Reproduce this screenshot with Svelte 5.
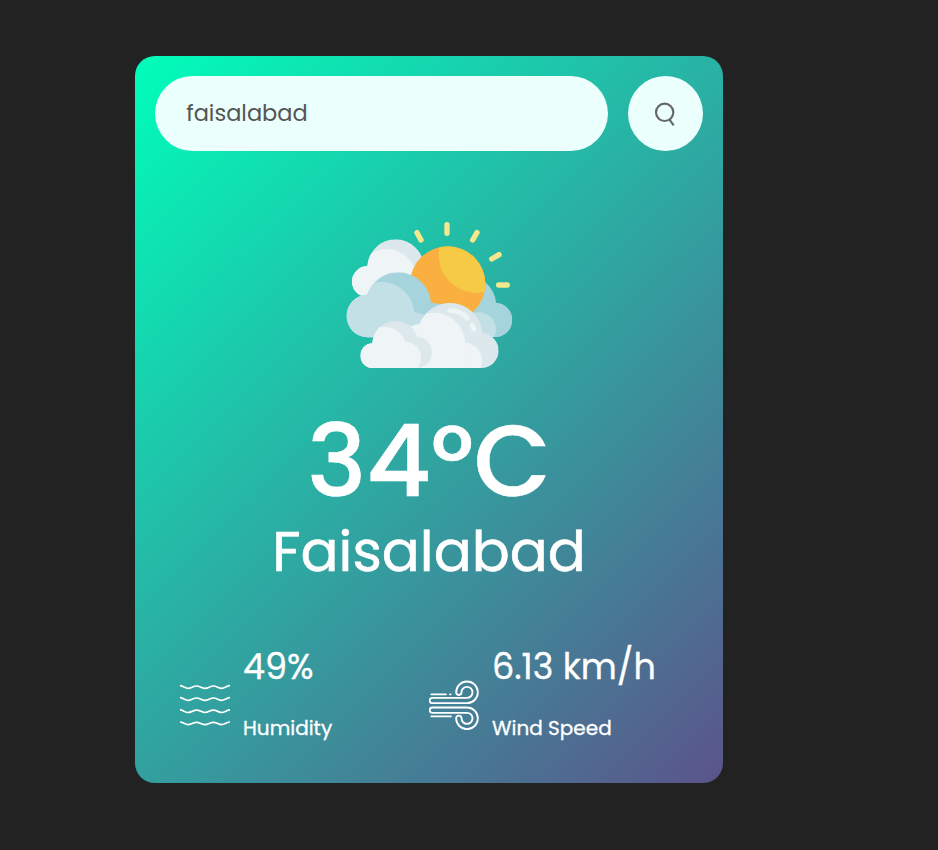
<script>
  let query = $state('faisalabad');
  const weather = { temp: 34, city: 'Faisalabad', humidity: 49, wind: 6.13 };
  const waves = [141, 177, 213.5, 250];
</script>

<main>
  <section class="card">
    <div class="search">
      <input type="text" bind:value={query} spellcheck="false" aria-label="City" />
      <button aria-label="Search">
        <svg width="91" height="95" viewBox="0 0 273 285">
          <g fill="none" stroke="#646868">
            <circle cx="134" cy="139" r="26" stroke-width="6.5" />
            <path d="M148 160 L161 178" stroke-width="6.5" />
          </g>
        </svg>
      </button>
    </div>

    <svg class="weather-icon" viewBox="-3 0 570 510" width="190" height="170">
      <defs>
        <clipPath id="back-left">
          <circle cx="182" cy="173" r="85" /><circle cx="97" cy="215" r="46" />
          <rect x="97" y="180" width="150" height="80" />
        </clipPath>
        <clipPath id="back-right">
          <circle cx="393" cy="287" r="91" /><circle cx="480" cy="330" r="52" />
          <rect x="380" y="290" width="100" height="92" />
        </clipPath>
        <clipPath id="sun"><circle cx="338" cy="222" r="113" /></clipPath>
        <clipPath id="middle">
          <circle cx="190" cy="285" r="98" /><circle cx="98" cy="318" r="63.500" />
          <path d="M98 300 H200 L286 279 Q312 278 340 290 V382 H98 Z" />
        </clipPath>
        <clipPath id="front">
          <circle cx="345" cy="376" r="97" /><circle cx="439" cy="422" r="52" />
          <circle cx="259" cy="408" r="66" />
          <rect x="220" y="400" width="219" height="74" />
        </clipPath>
        <clipPath id="small">
          <circle cx="181" cy="402" r="69" /><circle cx="244" cy="427" r="47" />
          <circle cx="113" cy="437" r="37" /><rect x="113" y="405" width="131" height="69" />
        </clipPath>
      </defs>

      <g stroke="#f5e78d" stroke-width="16" stroke-linecap="round">
        <path d="M336 44V70M246 68L258 90M426 68L413 90M492 134L470 147M491 225H517" />
      </g>
      <g clip-path="url(#back-left)">
        <rect width="570" height="510" fill="#dde8ed" />
        <circle cx="155" cy="205" r="88" fill="#eff4f7" />
        <circle cx="92" cy="216" r="50" fill="#eff4f7" />
      </g>
      <g clip-path="url(#back-right)">
        <rect width="570" height="510" fill="#a5d4dc" />
        <circle cx="432" cy="358" r="51" fill="#c4e0e7" />
      </g>
      <g clip-path="url(#sun)">
        <rect width="570" height="510" fill="#f9b040" />
        <circle cx="425" cy="135" r="114" fill="#f6ca45" />
      </g>
      <g clip-path="url(#middle)">
        <rect width="570" height="510" fill="#a5d4dc" />
        <circle cx="138" cy="315" r="100" fill="#c4e0e7" />
        <circle cx="85" cy="320" r="66" fill="#c4e0e7" />
        <circle cx="235" cy="375" r="68" fill="#c4e0e7" />
        <rect x="98" y="315" width="140" height="70" fill="#c4e0e7" />
      </g>
      <g clip-path="url(#front)">
        <rect width="570" height="510" fill="#dde8ed" />
        <circle cx="295" cy="404" r="96" fill="#eff4f7" />
        <circle cx="388" cy="451" r="53" fill="#eff4f7" />
        <rect x="220" y="400" width="168" height="80" fill="#eff4f7" />
      </g>
      <path d="M344 301 Q374 301 398 324 M411 345 L417 358" fill="none" stroke="#eff4f7" stroke-width="14" stroke-linecap="round" />
      <g clip-path="url(#small)">
        <rect width="570" height="510" fill="#dde8ed" />
        <circle cx="148" cy="415" r="65" fill="#eff4f7" />
        <circle cx="210" cy="443" r="48" fill="#eff4f7" />
        <rect x="70" y="402" width="140" height="80" fill="#eff4f7" />
      </g>
    </svg>

    <h1>{weather.temp}°C</h1>
    <h2>{weather.city}</h2>

    <div class="details">
      <div class="col">
        <svg class="detail-icon" viewBox="30 120 150 150">
          {#each waves as y}
            <path d="M30 {y - 4} C39 {y - 4} 45 {y + 4} 54 {y + 4} S70 {y - 3} 80 {y - 3} S95 {y + 4} 105 {y + 4} S120 {y - 3} 130 {y - 3} S146 {y + 4} 155 {y + 4} S171 {y - 4} 180 {y - 4}" fill="none" stroke="#fff" stroke-width="5" />
          {/each}
        </svg>
        <div>
          <p class="value">{weather.humidity}%</p>
          <p class="label">Humidity</p>
        </div>
      </div>
      <div class="col">
        <svg class="detail-icon" viewBox="27 120 150 150">
          <g fill="none" stroke="#fff" stroke-width="5.600" stroke-linecap="round">
            <path d="M37 173.500H141A16.500 16.500 0 1 0 124.500 157A8 8 0 0 1 108.500 157A32.500 32.500 0 1 1 141 189.500H37A8 8 0 0 1 37 173.500Z" />
            <path d="M37 218.500H141A16.500 16.500 0 1 1 124.500 235A8 8 0 0 0 108.500 235A32.500 32.500 0 1 0 141 202.500H37A8 8 0 0 0 37 218.500Z" />
            <path d="M34 163H78M90 163H92M34 229H93" />
          </g>
        </svg>
        <div>
          <p class="value">{weather.wind} km/h</p>
          <p class="label">Wind Speed</p>
        </div>
      </div>
    </div>
  </section>
</main>

<style>
  :global(body) {
    margin: 0;
    background: #222;
  }
  main {
    box-sizing: border-box;
    height: 850px;
    padding: 56px 0 0 135px;
    background: #222;
    border-bottom: 1px solid #292024;
    font-family: Poppins, Inter, 'Open Sans', sans-serif;
    overflow: hidden;
  }
  .card {
    box-sizing: border-box;
    width: 588px;
    height: 727px;
    padding: 20px;
    border-radius: 20px;
    background: linear-gradient(135deg, #00feba, #5b548a);
    color: #fff;
    text-align: center;
  }
  .search {
    display: flex;
    gap: 20px;
    height: 75px;
  }
  input {
    flex: 1;
    min-width: 0;
    box-sizing: border-box;
    border: 0;
    outline: 0;
    border-radius: 38px;
    padding: 0 31.25px 2px;
    background: #ebfffc;
    color: #555;
    font: 400 22.5px Poppins, Inter, 'Open Sans', sans-serif;
  }
  button {
    display: flex;
    align-items: center;
    justify-content: center;
    width: 75px;
    height: 75px;
    padding: 0;
    border: 0;
    border-radius: 50%;
    background: #ebfffc;
  }
  button svg {
    flex: none;
  }
  .weather-icon {
    display: block;
    margin: 59px auto 0;
  }
  h1 {
    margin: 31px 0 0;
    font-size: 100px;
    line-height: 100px;
    font-weight: 500;
    white-space: nowrap;
    -webkit-text-stroke: 0.6px #fff;
  }
  h2 {
    margin: 13px 0 0;
    font-size: 56.25px;
    line-height: 55px;
    font-weight: 400;
    white-space: nowrap;
    -webkit-text-stroke: 0.6px #fff;
  }
  .details {
    display: flex;
    margin-top: 68px;
    padding-left: 25px;
    text-align: left;
  }
  .col {
    display: flex;
    gap: 13px;
    width: 249px;
    flex: none;
  }
  .detail-icon {
    flex: none;
    width: 50px;
    height: 50px;
    margin-top: 33px;
  }
  p {
    margin: 0;
    white-space: nowrap;
    -webkit-text-stroke: 0.3px #fff;
  }
  .value {
    font-size: 35px;
    line-height: 40px;
  }
  .label {
    margin-top: 29px;
    font-size: 20px;
    line-height: 24px;
  }
</style>
